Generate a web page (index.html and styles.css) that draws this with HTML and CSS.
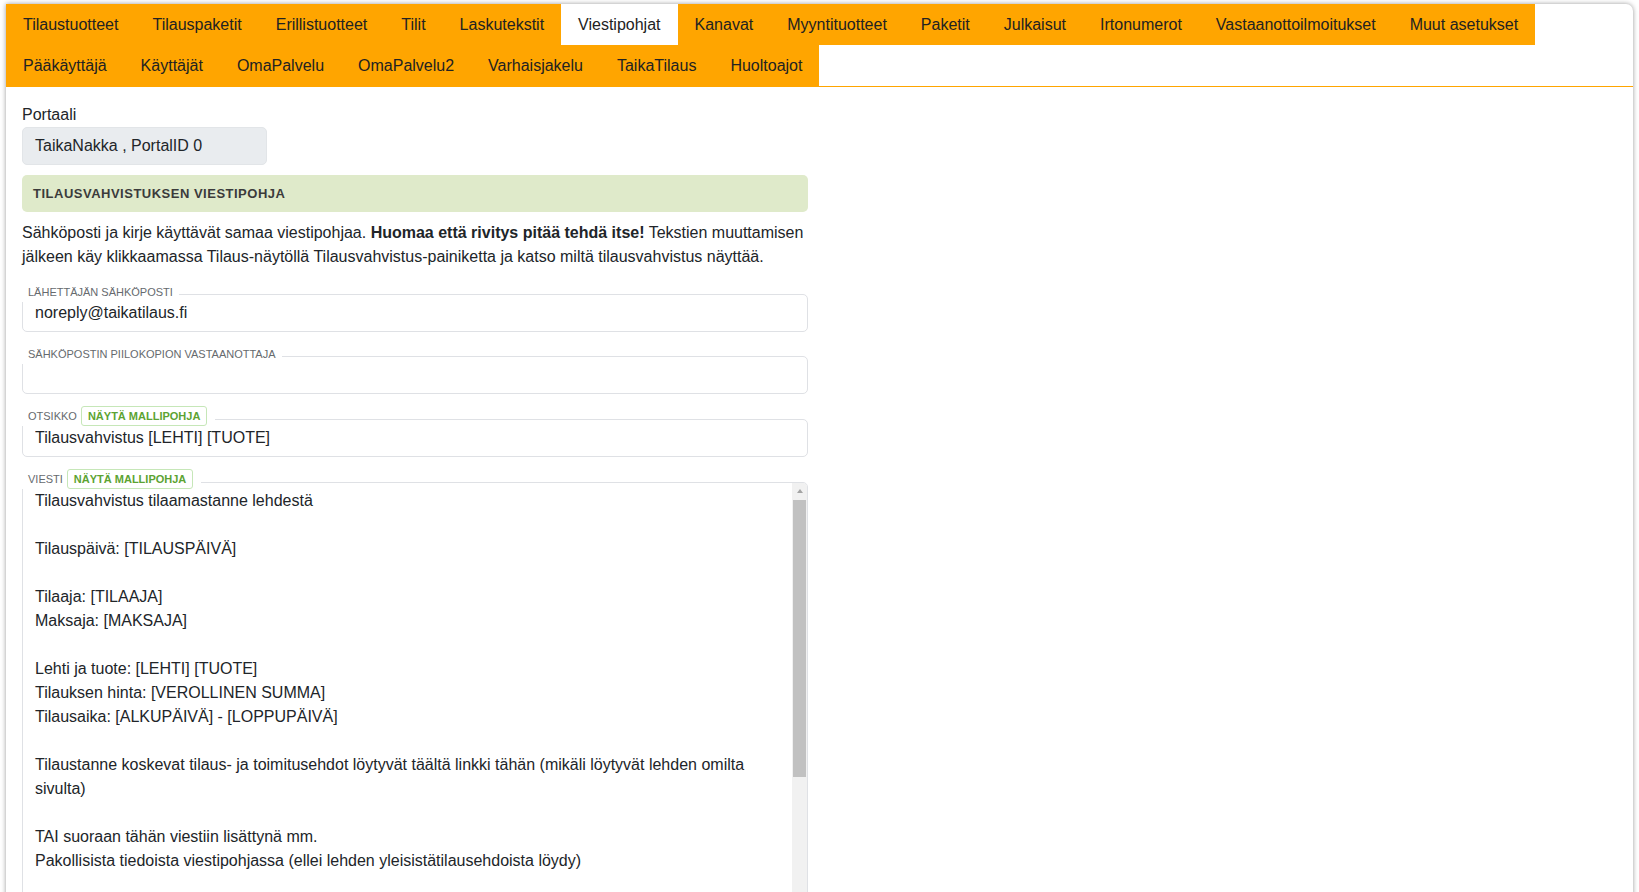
FILE: index.html
```html
<!DOCTYPE html>
<html lang="fi">
<head>
<meta charset="utf-8">
<title>Viestipohjat</title>
<link rel="stylesheet" href="styles.css">
</head>
<body>
<div class="card">
  <nav>
    <ul class="tabs">
      <li class="tab"><a href="#">Tilaustuotteet</a></li>
      <li class="tab"><a href="#">Tilauspaketit</a></li>
      <li class="tab"><a href="#">Erillistuotteet</a></li>
      <li class="tab"><a href="#">Tilit</a></li>
      <li class="tab"><a href="#">Laskutekstit</a></li>
      <li class="tab active"><a href="#">Viestipohjat</a></li>
      <li class="tab"><a href="#">Kanavat</a></li>
      <li class="tab"><a href="#">Myyntituotteet</a></li>
      <li class="tab"><a href="#">Paketit</a></li>
      <li class="tab"><a href="#">Julkaisut</a></li>
      <li class="tab"><a href="#">Irtonumerot</a></li>
      <li class="tab"><a href="#">Vastaanottoilmoitukset</a></li>
      <li class="tab"><a href="#">Muut asetukset</a></li>
      <li class="tab"><a href="#">Pääkäyttäjä</a></li>
      <li class="tab"><a href="#">Käyttäjät</a></li>
      <li class="tab"><a href="#">OmaPalvelu</a></li>
      <li class="tab"><a href="#">OmaPalvelu2</a></li>
      <li class="tab"><a href="#">Varhaisjakelu</a></li>
      <li class="tab"><a href="#">TaikaTilaus</a></li>
      <li class="tab"><a href="#">Huoltoajot</a></li>
    </ul>
  </nav>

  <main class="content">
    <div class="form">
      <div class="portal-label">Portaali</div>
      <div class="portal-value">TaikaNakka , PortalID 0</div>

      <div class="section-title">Tilausvahvistuksen viestipohja</div>

      <p class="intro"><span>Sähköposti ja kirje käyttävät samaa viestipohjaa.</span> <strong>Huomaa että rivitys pitää tehdä itse!</strong> <span>Tekstien muuttamisen</span> <span>jälkeen käy klikkaamassa Tilaus-näytöllä Tilausvahvistus-painiketta ja katso miltä tilausvahvistus näyttää.</span></p>

      <div class="field">
        <div class="field-label"><span class="legend">Lähettäjän sähköposti</span></div>
        <input class="field-input" type="text" value="noreply@taikatilaus.fi">
      </div>

      <div class="field">
        <div class="field-label"><span class="legend">Sähköpostin piilokopion vastaanottaja</span></div>
        <input class="field-input" type="text" value="">
      </div>

      <div class="field with-btn">
        <div class="field-label"><span class="legend">Otsikko <button class="template-btn" type="button">Näytä mallipohja</button></span></div>
        <input class="field-input" type="text" value="Tilausvahvistus [LEHTI] [TUOTE]">
      </div>

      <div class="field with-btn">
        <div class="field-label"><span class="legend">Viesti <button class="template-btn" type="button">Näytä mallipohja</button></span></div>
        <div class="message-wrap">
          <textarea class="message">Tilausvahvistus tilaamastanne lehdestä

Tilauspäivä: [TILAUSPÄIVÄ]

Tilaaja: [TILAAJA]
Maksaja: [MAKSAJA]

Lehti ja tuote: [LEHTI] [TUOTE]
Tilauksen hinta: [VEROLLINEN SUMMA]
Tilausaika: [ALKUPÄIVÄ] - [LOPPUPÄIVÄ]

Tilaustanne koskevat tilaus- ja toimitusehdot löytyvät täältä linkki tähän (mikäli löytyvät lehden omilta sivulta)

TAI suoraan tähän viestiin lisättynä mm.
Pakollisista tiedoista viestipohjassa (ellei lehden yleisistätilausehdoista löydy)

- Peruutusoikeus
- Asiakaspalvelun yhteystiedot

Ystävällisin terveisin
[LEHTI]
</textarea>
          <div class="scrollbar" aria-hidden="true">
            <span class="scroll-btn"><span class="arrow-up"></span></span>
            <span class="scroll-thumb"></span>
          </div>
        </div>
      </div>
    </div>
  </main>
</div>
</body>
</html>
```

FILE: styles.css
```css
html, body {
  margin: 0;
  height: 100%;
  overflow: hidden;
  background: #ffffff;
}

body {
  font-family: "Liberation Sans", Arial, sans-serif;
  font-size: 16px;
  color: #212529;
}

.card {
  margin: 4px 6px 0;
  min-height: 1000px;
  background: #ffffff;
  border-radius: 0 7px 0 0;
  box-shadow: 0 0 5px rgba(0, 0, 0, 0.4);
}

/* Tabs */
.tabs {
  display: flex;
  flex-wrap: wrap;
  list-style: none;
  margin: 0;
  padding: 0;
  border-bottom: 1px solid #ffa500;
}

.tab a {
  display: block;
  padding: 0 17px;
  line-height: 41px;
  background: #ffa500;
  color: #222222;
  text-decoration: none;
}

.tab.active a {
  background: #ffffff;
}

/* Content */
.content {
  padding: 16px 16px 0;
}

.form {
  width: 786px;
}

.portal-label {
  line-height: 24px;
}

.portal-value {
  width: 245px;
  box-sizing: border-box;
  padding: 6px 12px;
  line-height: 24px;
  background: #e9ecef;
  border: 1px solid #e2e5e8;
  border-radius: 5px;
}

.section-title {
  margin-top: 10px;
  padding: 9px 11px;
  line-height: 19px;
  font-size: 13px;
  font-weight: bold;
  letter-spacing: 0.5px;
  text-transform: uppercase;
  color: #3b3b3b;
  background: #dfeaca;
  border-radius: 5px;
}

.intro {
  margin: 9px 0 0;
  line-height: 24px;
}

.field {
  margin-top: 12px;
}

.intro + .field {
  margin-top: 13px;
}

.field-label {
  position: relative;
  z-index: 1;
  display: flex;
  height: 20px;
}

.legend {
  display: flex;
  align-items: center;
  padding: 0 6px;
  background: #ffffff;
  font-size: 11px;
  text-transform: uppercase;
  color: #666a6e;
}

.template-btn {
  margin-left: 4px;
  margin-right: 2px;
  height: 20px;
  padding: 0 6px;
  font-family: inherit;
  font-size: 11px;
  font-weight: bold;
  text-transform: uppercase;
  color: #5ca332;
  background: #ffffff;
  border: 1px solid #c6e7b8;
  border-radius: 3px;
}

.field-input {
  display: block;
  width: 100%;
  box-sizing: border-box;
  height: 38px;
  margin-top: -8px;
  padding: 6px 12px;
  font-family: inherit;
  font-size: 16px;
  line-height: 24px;
  color: #212529;
  background: #ffffff;
  border: 1px solid #dfe1e5;
  border-radius: 5px;
  outline: none;
}

.message-wrap {
  position: relative;
  margin-top: -8px;
}

.with-btn .field-input,
.with-btn .message-wrap {
  margin-top: -7px;
}

.message {
  display: block;
  width: 100%;
  box-sizing: border-box;
  height: 420px;
  margin: 0;
  padding: 6px 27px 6px 12px;
  font-family: inherit;
  font-size: 16px;
  line-height: 24px;
  color: #212529;
  background: #ffffff;
  border: 1px solid #dfe1e5;
  border-radius: 5px;
  resize: none;
  overflow: hidden;
  scrollbar-width: none;
  outline: none;
}

/* decorative scrollbar drawn over the textarea's right edge */
.scrollbar {
  position: absolute;
  top: 1px;
  right: 1px;
  bottom: 1px;
  width: 15px;
  display: flex;
  flex-direction: column;
  background: #f1f1f1;
  border-top-right-radius: 4px;
}

.scroll-btn {
  display: flex;
  align-items: center;
  justify-content: center;
  height: 15px;
}

.arrow-up {
  width: 0;
  height: 0;
  border-left: 3px solid transparent;
  border-right: 3px solid transparent;
  border-bottom: 4px solid #a3a3a3;
}

.scroll-thumb {
  height: 277px;
  margin: 2px 1px 0 1px;
  background: #c1c1c1;
}
```
